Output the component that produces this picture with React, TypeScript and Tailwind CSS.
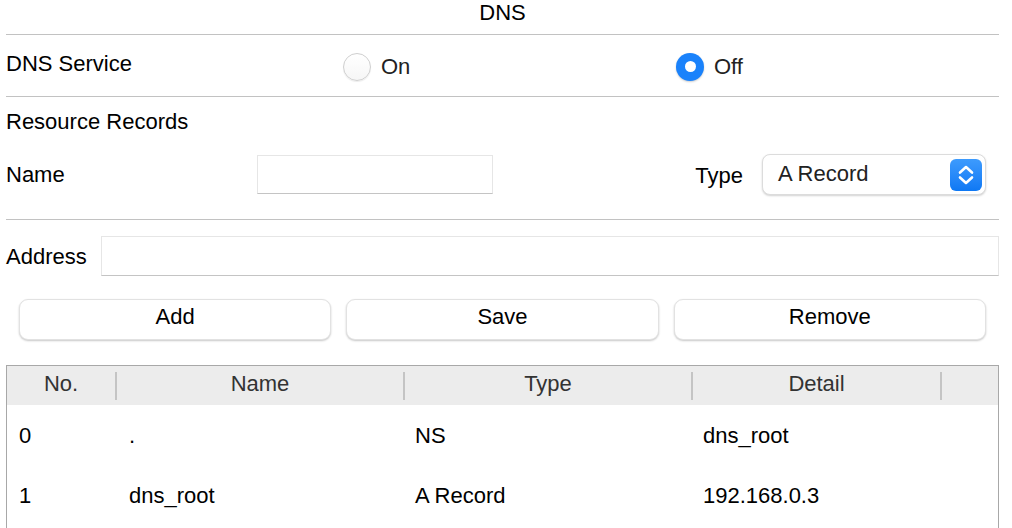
import React from "react";

function Radio({ checked }: { checked: boolean }) {
  if (checked) {
    return (
      <span className="inline-flex h-[28px] w-[28px] items-center justify-center rounded-full bg-[#1a82fb] shadow-[0_1px_2px_rgba(0,0,0,0.2)]">
        <span className="h-[11px] w-[11px] rounded-full bg-white" />
      </span>
    );
  }
  return (
    <span className="inline-block h-[28px] w-[28px] rounded-full border border-[#cfcfcf] bg-gradient-to-b from-[#ffffff] to-[#f6f6f6] shadow-[0_1px_1px_rgba(0,0,0,0.08)]" />
  );
}

function Input({ className }: { className: string }) {
  return (
    <div
      className={
        "border border-[#e6e6e6] border-b-[#c4c4c4] bg-white " + className
      }
    />
  );
}

export default function App() {
  const font = { fontFamily: '"Liberation Sans", Arial, sans-serif' };
  return (
    <div
      className="h-[528px] w-[1012px] overflow-hidden bg-white text-[22px] text-black"
      style={font}
    >
      <div className="ml-[6px] w-[993px]">
        {/* Title */}
        <div className="flex h-[35px] items-start justify-center border-b border-[#c2c2c2] leading-[26px]">
          DNS
        </div>

        {/* DNS Service */}
        <div className="grid h-[62px] grid-cols-3 items-center border-b border-[#c2c2c2]">
          <div className="-mt-[4px] leading-[26px]">DNS Service</div>
          <div className="flex items-center gap-[10px] pl-[6px] pt-[2px]">
            <Radio checked={false} />
            <span className="leading-[26px] text-[#222]">On</span>
          </div>
          <div className="flex items-center gap-[10px] pl-[8px] pt-[2px]">
            <Radio checked={true} />
            <span className="leading-[26px] text-[#222]">Off</span>
          </div>
        </div>

        {/* Resource Records */}
        <div className="flex h-[50px] items-center leading-[26px]">
          Resource Records
        </div>

        {/* Name / Type */}
        <div className="flex h-[73px] items-start border-b border-[#c2c2c2] pt-[7px]">
          <div className="w-[251px] pt-[8px] leading-[26px]">Name</div>
          <Input className="mt-[1px] h-[39px] w-[236px]" />
          <div className="ml-auto pt-[9px] leading-[26px]">Type</div>
          <div className="ml-[19px] mr-[13px] flex h-[41px] w-[224px] items-center rounded-[8px] border border-[#dcdcdc] bg-white pl-[15px] pr-[3px] shadow-[0_1px_2px_rgba(0,0,0,0.18)]">
            <span className="flex-1 pb-[2px] leading-[26px] text-[#222]">A Record</span>
            <span className="flex h-[32px] w-[32px] items-center justify-center rounded-[6px] bg-gradient-to-b from-[#3d9bfd] to-[#0d78f4]">
              <svg width="18" height="22" viewBox="0 0 18 22" fill="none">
                <path
                  d="M3 8.5 L9 3 L15 8.5"
                  stroke="white"
                  strokeWidth="2.6"
                  strokeLinecap="round"
                  strokeLinejoin="round"
                />
                <path
                  d="M3 13.5 L9 19 L15 13.5"
                  stroke="white"
                  strokeWidth="2.6"
                  strokeLinecap="round"
                  strokeLinejoin="round"
                />
              </svg>
            </span>
          </div>
        </div>

        {/* Address */}
        <div className="flex h-[62px] items-start pt-[16px]">
          <div className="w-[95px] pt-[8px] leading-[26px]">Address</div>
          <Input className="h-[40px] flex-1" />
        </div>

        {/* Buttons */}
        <div className="flex gap-[15px] px-[13px] pt-[17px]">
          {["Add", "Save", "Remove"].map((t) => (
            <button
              key={t}
              className="flex h-[41px] flex-1 items-center justify-center rounded-[9px] border border-[#e2e2e2] bg-white pb-[5px] leading-[26px] text-black shadow-[0_1px_2px_rgba(0,0,0,0.22)]"
              style={font}
            >
              {t}
            </button>
          ))}
        </div>

        {/* Table */}
        <div className="mt-[25px] h-[200px] border-x border-t border-[#a8a8a8]">
          <div className="flex h-[39px] items-center bg-[#ececec] text-[#333]">
            <div className="flex h-full w-[108px] items-center justify-center pb-[4px] leading-[26px]">
              No.
            </div>
            <div className="h-[28px] w-[2px] bg-[#c4c4c4]" />
            <div className="flex h-full w-[286px] items-center justify-center pb-[4px] leading-[26px]">
              Name
            </div>
            <div className="h-[28px] w-[2px] bg-[#c4c4c4]" />
            <div className="flex h-full w-[286px] items-center justify-center pb-[4px] leading-[26px]">
              Type
            </div>
            <div className="h-[28px] w-[2px] bg-[#c4c4c4]" />
            <div className="flex h-full w-[247px] items-center justify-center pb-[4px] leading-[26px]">
              Detail
            </div>
            <div className="h-[28px] w-[2px] bg-[#c4c4c4]" />
            <div className="flex-1" />
          </div>
          {[
            ["0", ".", "NS", "dns_root"],
            ["1", "dns_root", "A Record", "192.168.0.3"],
          ].map((r) => (
            <div key={r[0]} className="flex h-[60px] items-center pt-[2px] leading-[26px]">
              <div className="w-[110px] pl-[12px]">{r[0]}</div>
              <div className="w-[288px] pl-[12px]">{r[1]}</div>
              <div className="w-[288px] pl-[10px]">{r[2]}</div>
              <div className="w-[249px] pl-[10px]">{r[3]}</div>
            </div>
          ))}
        </div>
      </div>
    </div>
  );
}
